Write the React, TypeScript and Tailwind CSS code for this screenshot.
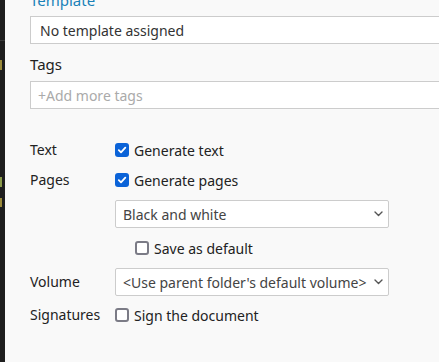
import React from "react";

const font = { fontFamily: '"Noto Sans", "Open Sans", sans-serif' };

function CheckBox({ checked }: { checked?: boolean }) {
  if (checked) {
    return (
      <span className="flex h-[14px] w-[14px] shrink-0 items-center justify-center rounded-[3px] bg-[#0b63d8]">
        <svg width="10" height="10" viewBox="0 0 10 10" fill="none">
          <path d="M1.8 5.2 L4 7.3 L8.3 2.6" stroke="#fff" strokeWidth="1.8" strokeLinecap="round" strokeLinejoin="round" />
        </svg>
      </span>
    );
  }
  return <span className="h-[14px] w-[14px] shrink-0 rounded-[3px] border-2 border-[#7b7b86] bg-white" />;
}

function Chevron() {
  return (
    <svg width="9" height="6" viewBox="0 0 9 6" fill="none">
      <path d="M1 1 L4.5 4.5 L8 1" stroke="#555" strokeWidth="1.4" strokeLinecap="round" strokeLinejoin="round" />
    </svg>
  );
}

function Select({ value }: { value: string }) {
  return (
    <div className="flex h-[28px] w-[274px] items-center justify-between rounded-[2px] border border-[#cccccc] bg-white pl-[7px] pr-[5px] text-[14px] text-[#444]">
      <span>{value}</span>
      <Chevron />
    </div>
  );
}

export default function App() {
  return (
    <div className="flex h-[362px] w-[439px] overflow-hidden" style={font}>
      <div className="flex w-[5px] shrink-0 flex-col bg-[#1e1e1e]">
        <div className="mt-[40px] h-px bg-[#3a3a3a]" />
        <div className="mt-[19px] h-[10px] w-[2px] bg-[#9a8a3a]" />
        <div className="mt-[107px] h-[10px] w-[2px] bg-[#8a9a4a]" />
        <div className="mt-[11px] h-[9px] w-[2px] bg-[#9a8a3a]" />
      </div>
      <div className="flex-1 overflow-hidden bg-[#f9f9f9] pl-[25px]">
        <div className="-mt-[10px] text-[15px] leading-[20px] text-[#1a82b8]">Template</div>
        <div className="mt-[6px] flex h-[28px] w-[430px] items-center border border-[#cccccc] bg-white pl-[9px] text-[14px] text-[#333]">
          No template assigned
        </div>
        <div className="mt-[10px] text-[15px] leading-[20px] text-[#222]">Tags</div>
        <div className="mt-[7px] flex h-[28px] w-[430px] items-center border border-[#cccccc] bg-white pl-[7px] text-[14px] text-[#aaa]">
          +Add more tags
        </div>

        <div className="mt-[31px] grid grid-cols-[85px_1fr] items-center text-[14px] text-[#222]">
          <div className="h-[20px] leading-[20px]">Text</div>
          <label className="flex h-[20px] items-center gap-[5px]">
            <CheckBox checked />
            <span>Generate text</span>
          </label>

          <div className="mt-[10px] h-[20px] leading-[20px]">Pages</div>
          <label className="mt-[10px] flex h-[20px] items-center gap-[5px]">
            <CheckBox checked />
            <span>Generate pages</span>
          </label>

          <div />
          <div className="mt-[10px]">
            <Select value="Black and white" />
          </div>

          <div />
          <label className="mt-[10px] flex h-[20px] items-center gap-[5px] pl-[20px]">
            <CheckBox />
            <span>Save as default</span>
          </label>

          <div className="mt-[10px] h-[20px] leading-[20px]">Volume</div>
          <div className="mt-[10px]">
            <Select value="<Use parent folder's default volume>" />
          </div>

          <div className="mt-[9px] h-[20px] leading-[20px]">Signatures</div>
          <label className="mt-[9px] flex h-[20px] items-center gap-[5px]">
            <CheckBox />
            <span>Sign the document</span>
          </label>
        </div>
      </div>
    </div>
  );
}
